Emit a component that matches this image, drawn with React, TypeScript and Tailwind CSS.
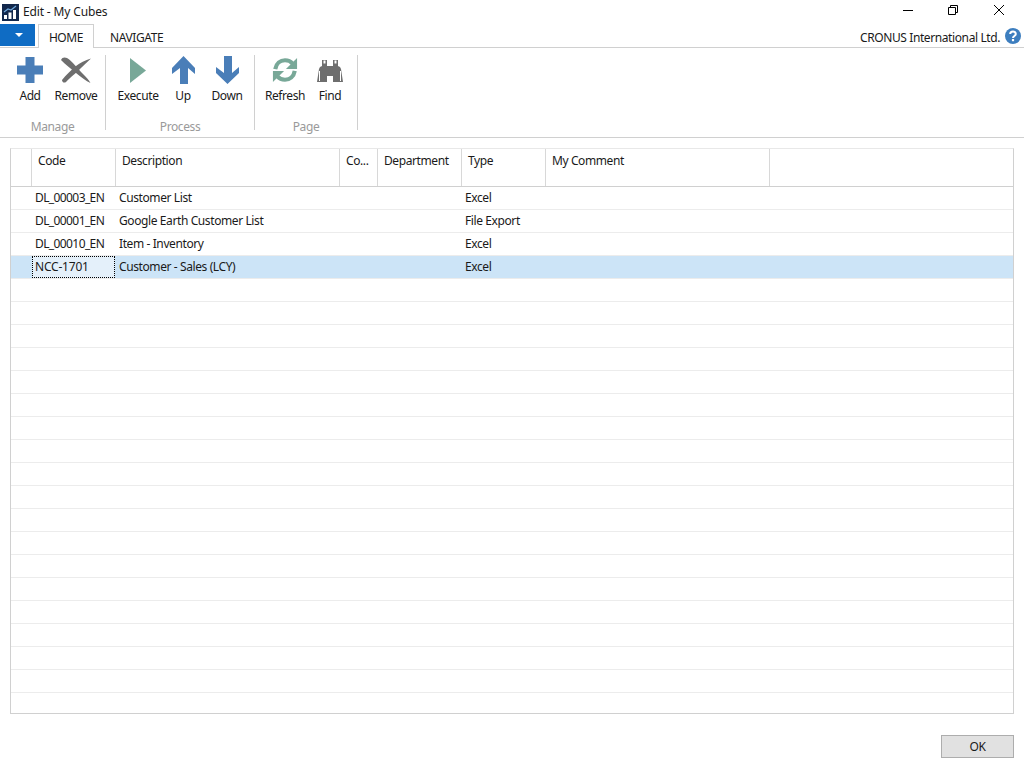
const FONT = "font-['Noto_Sans','Open_Sans',sans-serif] tracking-[-0.4px]";

const columns = [
  { label: "", width: "w-[21px]" },
  { label: "Code", width: "w-[84px]" },
  { label: "Description", width: "w-[224px]" },
  { label: "Co...", width: "w-[38px]" },
  { label: "Department", width: "w-[84px]" },
  { label: "Type", width: "w-[84px]" },
  { label: "My Comment", width: "w-[224px]" },
];

const rows = [
  { code: "DL_00003_EN", description: "Customer List", type: "Excel" },
  { code: "DL_00001_EN", description: "Google Earth Customer List", type: "File Export" },
  { code: "DL_00010_EN", description: "Item - Inventory", type: "Excel" },
  { code: "NCC-1701", description: "Customer - Sales (LCY)", type: "Excel", selected: true },
];

const emptyRows = Array.from({ length: 18 });

const BLUE = "#4a7eb8";
const GREEN = "#78a898";
const GRAY = "#6e6e6e";

const AddIcon = () => (
  <svg width="26" height="26" viewBox="0 0 26 26">
    <path d="M8.5 0h9v8.5H26v9h-8.5V26h-9v-8.5H0v-9h8.5z" fill={BLUE} />
  </svg>
);
const RemoveIcon = () => (
  <svg width="30" height="26" viewBox="0 0 30 26">
    <path d="M0 3C1 0 4 0 6 1c5 3 11 11 16 16 3 3 6 6 7.500 9-4.500-2-9.500-6-14.500-10C10 12 4 7 0 3z" fill={GRAY} />
    <path d="M30 1.500C24 3 19 6 15 9 10 13 5 18 1 23c0 2 2 3.500 4 2 3-3 7-7 11-10 5-5 10-10 14-13.500z" fill={GRAY} />
  </svg>
);
const ExecuteIcon = () => (
  <svg width="16" height="25" viewBox="0 0 16 25">
    <path d="M0 0l16 12.500L0 25z" fill={GREEN} />
  </svg>
);
const UpIcon = () => (
  <svg width="23" height="28" viewBox="0 0 23 28">
    <path d="M11.500 0L23 12v6l-7-6v16H8V12l-8 6v-6z" fill={BLUE} />
  </svg>
);
const DownIcon = () => (
  <svg width="23" height="28" viewBox="0 0 23 28">
    <path d="M8 0h8v17l7-6v6L11.500 28 0 17v-6l8 6z" fill={BLUE} />
  </svg>
);
const RefreshIcon = () => (
  <svg width="26" height="26" viewBox="0 0 28 28" fill="none">
    <path d="M3.500 13C4.500 7 9 3.500 14 3.500c3 0 6 1 8 3.500" stroke={GREEN} strokeWidth="4.500" />
    <path d="M27 1v12H15z" fill={GREEN} />
    <path d="M24.500 15c-1 6-5.500 9.500-10.500 9.500-3 0-6-1-8-3.500" stroke={GREEN} strokeWidth="4.500" />
    <path d="M1 27V15h12z" fill={GREEN} />
  </svg>
);
const FindIcon = () => (
  <svg width="26" height="23" viewBox="0 0 26 23">
    <path d="M5 1h5v6h6V1h5v6l2 1 1 2 2 13H16v-6h-6v6H0l2-13 1-2 2-1z" fill={GRAY} />
    <path d="M2.500 12v10M23.500 12v10" stroke="#ffffff" strokeWidth="1" />
    <rect x="6.500" y="1.500" width="2" height="3" fill="#ffffff" />
    <rect x="17.500" y="1.500" width="2" height="3" fill="#ffffff" />
  </svg>
);

const RibbonButton = ({ label, icon, width }: { label: string; icon: React.ReactNode; width: string }) => (
  <div className={`flex flex-col items-center ${width}`}>
    <div className="flex h-[30px] items-center justify-center">{icon}</div>
    <span className="mt-[2px] text-xs leading-[17px] text-[#1a1a1a]">{label}</span>
  </div>
);

const RibbonGroup = ({ title, width, pad, children }: { title: string; width: string; pad: string; children: React.ReactNode }) => (
  <div className={`flex flex-col border-r border-[#d0d0d0] ${width}`}>
    <div className={`flex ${pad}`}>{children}</div>
    <span className="mt-auto -mb-[5px] text-center text-xs leading-[16px] text-[#9a9a9a]">{title}</span>
  </div>
);

export default function App() {
  return (
    <div className={`flex h-[768px] w-[1024px] flex-col overflow-hidden bg-white text-xs text-[#1a1a1a] ${FONT}`}>
      {/* title bar */}
      <div className="flex h-[24px] items-center pl-[2px]">
        <svg width="17" height="17" viewBox="0 0 17 17">
          <rect width="17" height="17" fill="#12284c" />
          <path d="M2 15v-4h3v4zM6.500 15V8.500h3V15zM11 15V6h3v9z" fill="#ffffff" />
          <path d="M2 8l4-3 3 1 5-4" stroke="#6fa8dc" strokeWidth="1.200" fill="none" />
        </svg>
        <span className="ml-[4px] text-xs tracking-[-0.15px]">Edit - My Cubes</span>
        <div className="mb-[4px] ml-auto flex items-center">
          <svg width="10" height="10" viewBox="0 0 10 10" className="mr-[35px]">
            <path d="M0 5.500h10" stroke="#000" strokeWidth="1" />
          </svg>
          <svg width="10" height="10" viewBox="0 0 10 10" className="mr-[36px]">
            <path d="M2.500 2.500V.5h7v7h-2M.5 2.500h7v7h-7z" stroke="#000" strokeWidth="1" fill="none" />
          </svg>
          <svg width="10" height="10" viewBox="0 0 10 10" className="mr-[20px]">
            <path d="M0 0l10 10M10 0L0 10" stroke="#000" strokeWidth="1" />
          </svg>
        </div>
      </div>

      {/* tabs */}
      <div className="relative z-10 -mb-px flex h-[24px]">
        <div className="flex h-[22px] w-[35px] items-center justify-center bg-[#0f6cc4] pl-[2px]">
          <div className="h-0 w-0 border-x-[4px] border-t-[4px] border-x-transparent border-t-white" />
        </div>
        <div className="ml-[3px] flex h-[24px] w-[56px] items-center justify-center border-x border-t border-[#d0d0d0] bg-white pt-[3px]">HOME</div>
        <span className="ml-[16px] flex items-center pt-[3px]">NAVIGATE</span>
        <div className="ml-auto flex items-center pr-[3px]">
          <span className="pt-[3px]">CRONUS International Ltd.</span>
          <svg width="16" height="16" viewBox="0 0 16 16" className="ml-[5px]">
            <circle cx="8" cy="8" r="8" fill="#3d7ebf" />
            <path d="M5.200 6c0-3.400 5.600-3.400 5.600 0 0 2-2.800 2-2.800 4" stroke="#fff" strokeWidth="2" fill="none" />
            <rect x="6.900" y="11" width="2.200" height="2.200" fill="#fff" />
          </svg>
        </div>
      </div>

      {/* ribbon */}
      <div className="flex h-[91px] border-y border-[#d0d0d0] pt-[7px] pb-[7px]">
        <RibbonGroup title="Manage" width="w-[106px]" pad="pl-[8px]">
          <RibbonButton label="Add" width="w-[44px]" icon={<AddIcon />} />
          <RibbonButton label="Remove" width="w-[48px]" icon={<RemoveIcon />} />
        </RibbonGroup>
        <RibbonGroup title="Process" width="w-[149px]" pad="pl-[4px]">
          <RibbonButton label="Execute" width="w-[56px]" icon={<ExecuteIcon />} />
          <RibbonButton label="Up" width="w-[34px]" icon={<UpIcon />} />
          <RibbonButton label="Down" width="w-[54px]" icon={<DownIcon />} />
        </RibbonGroup>
        <RibbonGroup title="Page" width="w-[103px]" pad="pl-[5px]">
          <RibbonButton label="Refresh" width="w-[50px]" icon={<RefreshIcon />} />
          <RibbonButton label="Find" width="w-[40px]" icon={<FindIcon />} />
        </RibbonGroup>
      </div>

      {/* grid */}
      <div className="mx-[10px] mt-[10px] h-[566px] overflow-hidden border border-[#d0d0d0] border-t-[#e8e8e8]">
        <div className="flex h-[38px] border-b border-[#d0d0d0]">
          {columns.map((col, i) => (
            <div key={i} className={`${col.width} flex-none border-r border-[#d8d8d8] pl-[6px] pt-[3px] leading-[17px]`}>
              {col.label}
            </div>
          ))}
        </div>
        {rows.map((row) => (
          <div
            key={row.code}
            className={`flex h-[23px] items-center border-b border-[#ececec] ${row.selected ? "bg-[#cce4f7]" : ""}`}
          >
            <div className="w-[21px] flex-none" />
            <div
              className={`flex h-full w-[83px] flex-none items-center ${
                row.selected
                  ? "border border-dotted border-black bg-[#e4f0fa] pl-[2px] tracking-[-0.2px]"
                  : "pl-[3px] tracking-[-0.6px]"
              }`}
            >
              {row.code}
            </div>
            <div className="w-[347px] flex-none pl-[4px]">{row.description}</div>
            <div className="flex-none pl-[3px]">{row.type}</div>
          </div>
        ))}
        {emptyRows.map((_, i) => (
          <div key={i} className="h-[23px] border-b border-[#ececec]" />
        ))}
      </div>

      {/* footer */}
      <div className="mt-[21px] flex justify-end pr-[10px]">
        <button className="h-[23px] w-[73px] border border-[#adadad] bg-[#e1e1e1] text-xs">OK</button>
      </div>
    </div>
  );
}
